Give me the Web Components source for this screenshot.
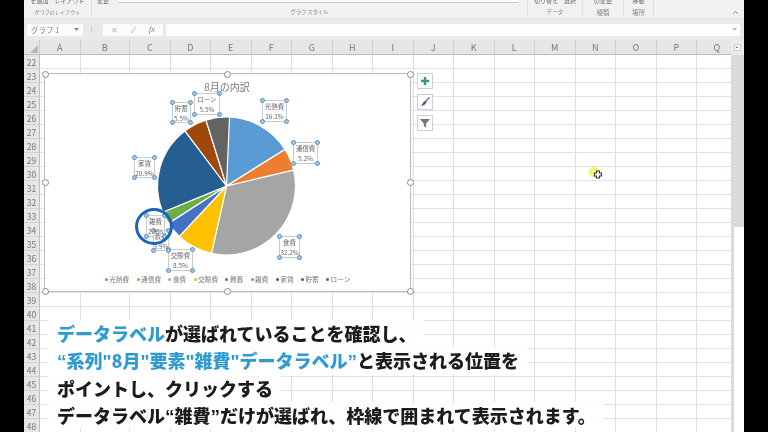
<!DOCTYPE html>
<html lang="ja">
<head>
<meta charset="utf-8">
<title>グラフ</title>
<style>
    html, body { margin: 0; height: 100%; background: #000; overflow: hidden; }
    body { font-family: "Noto Sans CJK JP", "Noto Sans", sans-serif; }
</style>
</head>
<body>
<excel-app>
    <excel-ribbon slot="top"></excel-ribbon>
    <excel-formula-bar slot="top"></excel-formula-bar>
    <excel-sheet>
        <pie-chart></pie-chart>
        <sheet-caption></sheet-caption>
        <cell-cursor></cell-cursor>
    </excel-sheet>
</excel-app>

<script>
class ExcelApp extends HTMLElement {
    connectedCallback() {
        this.attachShadow({ mode: "open" });
        this.shadowRoot.innerHTML = `
            <style>
                :host {
                    display: flex;
                    flex-direction: column;
                    width: 720px;
                    height: 432px;
                    margin-left: 24px;
                    background: #f0f0f0;
                    overflow: hidden;
                    filter: blur(0.45px);
                }
            </style>
            <slot name="top"></slot>
            <slot></slot>
        `;
    }
}

class ExcelRibbon extends HTMLElement {
    connectedCallback() {
        this.attachShadow({ mode: "open" });
        const groups = [
            { w: 68, top: "を追加　レイアウト", label: "グラフのレイアウト", size: 5.1 },
            { w: 436, top: "変更", label: "グラフ スタイル", size: 5.2, gallery: true },
            { w: 55, top: "切り替え　選択", label: "データ", size: 5.6 },
            { w: 41, top: "の変更", label: "種類", size: 6.5 },
            { w: 30, top: "移動", label: "場所", size: 6.5 },
        ];
        this.shadowRoot.innerHTML = `
            <style>
                :host {
                    display: flex;
                    height: 18px;
                    background: #f1f1f1;
                    font-size: 6px;
                    color: #777;
                    flex: none;
                    position: relative;
                    overflow: hidden;
                }
                .group {
                    display: flex;
                    flex-direction: column;
                    align-items: center;
                    justify-content: space-between;
                    border-right: 1px solid #dcdcdc;
                    box-sizing: border-box;
                    height: 17px;
                    position: relative;
                }
                .top { line-height: 6px; margin-top: -2px; white-space: nowrap; color: #666; }
                .label { line-height: 8px; margin-bottom: 1px; white-space: nowrap; color: #888; }
                .gal { align-items: stretch; }
                .gal .top { align-self: flex-start; margin-left: 5px; }
                .gal .label { align-self: center; }
                .strip {
                    position: absolute; left: 26px; right: 8px; top: 0; height: 2px;
                    background: #fbfbfb; border-bottom: 1px solid #c8c8c8;
                }
                .chev {
                    position: absolute; right: 6px; top: 10px;
                    width: 5px; height: 5px;
                }
            </style>
            ${groups.map(g => `
                <div class="group ${g.gallery ? "gal" : ""}" style="width:${g.w}px">
                    ${g.gallery ? '<div class="strip"></div>' : ""}
                    <span class="top">${g.top}</span>
                    <span class="label" style="font-size:${g.size}px">${g.label}</span>
                </div>`).join("")}
            <svg class="chev" viewBox="0 0 5 5"><path d="M0.5 3.5 L2.5 1.5 L4.5 3.5" fill="none" stroke="#777" stroke-width="1"/></svg>
        `;
    }
}

class ExcelFormulaBar extends HTMLElement {
    connectedCallback() {
        this.attachShadow({ mode: "open" });
        this.shadowRoot.innerHTML = `
            <style>
                :host {
                    display: flex;
                    align-items: center;
                    height: 22px;
                    flex: none;
                    background: #e9e9e9;
                    border-top: 1px solid #e2e2e2;
                    box-sizing: border-box;
                    padding: 0 4px 0 3px;
                    gap: 3px;
                    font-size: 7.5px;
                    color: #888;
                }
                .name {
                    width: 56px; height: 12px; background: #fbfbfb;
                    display: flex; align-items: center; justify-content: space-between;
                    padding: 0 4px 0 4px; box-sizing: border-box;
                }
                .name svg { width: 5px; height: 3px; }
                .grip { width: 9px; display: flex; justify-content: center; margin-left: 1px; margin-right: 4px; }
                .grip i { width: 1px; height: 7px; background: #ccc; }
                .fx {
                    width: 60px; height: 12px; background: #fbfbfb;
                    display: flex; align-items: center; justify-content: space-around;
                    padding: 0 2px; box-sizing: border-box; color: #b5b5b5; font-size: 8px;
                }
                .fx b { font-weight: 400; font-style: italic; color: #777; font-family: "Liberation Serif", serif; }
                .input { flex: 1; height: 12px; background: #fdfdfd; display: flex; justify-content: flex-end; align-items: center; padding-right: 3px; }
                .input svg { width: 5px; height: 3px; }
            </style>
            <div class="name"><span>グラフ 1</span><svg viewBox="0 0 5 3"><path d="M0 0H5L2.5 3Z" fill="#888"/></svg></div>
            <div class="grip"><i></i></div>
            <div class="fx"><span>✕</span><span>✓</span><b>fx</b></div>
            <div class="input"><svg viewBox="0 0 5 3"><path d="M0 0H5L2.5 3Z" fill="#bbb"/></svg></div>
        `;
    }
}

class ExcelSheet extends HTMLElement {
    connectedCallback() {
        this.attachShadow({ mode: "open" });
        const cols = ["A","B","C","D","E","F","G","H","I","J","K","L","M","N","O","P","Q"];
        const widths = [40.5, 49.5, 40.5, 40.5, 40.5, 40.5, 40.5, 40.5, 40.5, 40.5, 40.5, 40.5, 40.5, 40.5, 40.5, 40.5, 40.5];
        const rows = [];
        for (let r = 22; r <= 48; r++) rows.push(r);
        const tmpl = widths.map(w => w + "px").join(" ");
        this.shadowRoot.innerHTML = `
            <style>
                :host {
                    display: flex;
                    flex: 1;
                    min-height: 0;
                    position: relative;
                    overflow: hidden;
                    font-size: 9px;
                    color: #777;
                }
                .wrap { flex: 1; min-width: 0; overflow: hidden; }
                .grid {
                    display: grid;
                    grid-template-columns: 16px ${tmpl};
                    grid-auto-rows: 14px;
                    grid-template-rows: 15px;
                    width: max-content;
                }
                .corner, .ch, .rh {
                    background: #e6e6e6;
                    display: flex; align-items: center; justify-content: center;
                    box-sizing: border-box;
                }
                .corner { position: relative; border-right: 1px solid #cfcfcf; border-bottom: 1px solid #bdbdbd; }
                .corner::after {
                    content: ""; position: absolute; right: 1px; bottom: 1px;
                    border-left: 8px solid transparent; border-bottom: 8px solid #b8b8b8;
                }
                .ch { border-right: 1px solid #cdcdcd; border-bottom: 1px solid #bdbdbd; }
                .rh { border-right: 1px solid #bdbdbd; border-bottom: 1px solid #d2d2d2; font-size: 8.5px; }
                .c { background: #fff; border-right: 1px solid #dedede; border-bottom: 1px solid #e2e2e2; box-sizing: border-box; }
                .bar {
                    width: 13px; flex: none; background: #d9dbd9;
                    display: flex; flex-direction: column; position: relative;
                }
                .up {
                    height: 15px; background: #ececec;
                    display: flex; align-items: center; justify-content: center;
                }
                .up i {
                    width: 7px; height: 7px; background: #fff; border: 1px solid #ccc;
                    box-sizing: border-box; display: block; position: relative;
                }
                .up i::after {
                    content: ""; position: absolute; left: 1px; top: 1px;
                    border-left: 1.5px solid transparent; border-right: 1.5px solid transparent; border-bottom: 2px solid #555;
                }
                .track { height: 172px; }
                .thumb { flex: 1; background: #fff; margin-left: 3px; }
            </style>
            <div class="wrap">
                <div class="grid">
                    <div class="corner"></div>
                    ${cols.map(c => `<div class="ch">${c}</div>`).join("")}
                    ${rows.map(r => `<div class="rh">${r}</div>` + cols.map(() => `<div class="c"></div>`).join("")).join("")}
                </div>
            </div>
            <div class="bar"><div class="up"><i></i></div><div class="track"></div><div class="thumb"></div></div>
            <slot></slot>
        `;
    }
}

class DataLabel extends HTMLElement {
    static get observedAttributes() {
        return ["x", "y", "w", "h"];
    }
    attributeChangedCallback() {
        this.place();
    }
    place() {
        this.style.left = this.getAttribute("x") + "px";
        this.style.top = this.getAttribute("y") + "px";
        this.style.width = this.getAttribute("w") + "px";
        this.style.height = this.getAttribute("h") + "px";
    }
    connectedCallback() {
        this.attachShadow({ mode: "open" });
        this.shadowRoot.innerHTML = `
            <style>
                :host {
                    position: absolute;
                    display: flex;
                    flex-direction: column;
                    align-items: center;
                    justify-content: center;
                    gap: 2px;
                    box-sizing: border-box;
                    border: 1px solid #cacaca;
                    font-size: 6.5px;
                    line-height: 8px;
                    color: #666;
                    white-space: nowrap;
                }
                i {
                    position: absolute; width: 3.4px; height: 3.4px; border-radius: 50%;
                    background: #a9c6e3; border: 1px solid #5b8fc0;
                }
                .a { left: -3.2px; top: -3.2px; } .b { right: -3.2px; top: -3.2px; }
                .c { left: -3.2px; bottom: -3.2px; } .d { right: -3.2px; bottom: -3.2px; }
            </style>
            <span>${this.getAttribute("name")}</span>
            <span>${this.getAttribute("value")}</span>
            <i class="a"></i><i class="b"></i><i class="c"></i><i class="d"></i>
        `;
        this.place();
    }
}

class PieChart extends HTMLElement {
    connectedCallback() {
        this.attachShadow({ mode: "open" });
        const slices = [
            ["光熱費", 16.1, "#5b9bd5"],
            ["通信費", 5.2, "#ed7d31"],
            ["食費", 32.2, "#a5a5a5"],
            ["交際費", 8.5, "#ffc000"],
            ["教養", 3.9, "#4472c4"],
            ["雑費", 2.9, "#70ad47"],
            ["家賃", 20.9, "#255e91"],
            ["貯蓄", 5.5, "#9e480e"],
            ["ローン", 5.5, "#636363"],
        ];
        // page coords minus the chart's padding box (45,74)
        const cx = 181.5, cy = 112, r = 69;
        let angle = 0;
        const paths = slices.map(([, v, color]) => {
            const a0 = angle * Math.PI / 180;
            angle += v * 3.6;
            const a1 = angle * Math.PI / 180;
            const large = v > 50 ? 1 : 0;
            const d = `M${cx} ${cy} L${cx + r * Math.sin(a0)} ${cy - r * Math.cos(a0)} A${r} ${r} 0 ${large} 1 ${cx + r * Math.sin(a1)} ${cy - r * Math.cos(a1)} Z`;
            return `<path d="${d}" fill="${color}" stroke="#fff" stroke-width="1.2"/>`;
        }).join("");
        const handles = [[0,0],[50,0],[100,0],[0,50],[100,50],[0,100],[50,100],[100,100]]
            .map(([x, y]) => `<i class="h" style="left:${x}%;top:${y}%"></i>`).join("");
        this.shadowRoot.innerHTML = `
            <style>
                :host {
                    position: absolute;
                    left: 20px; top: 33px;
                    width: 367px; height: 219px;
                    box-sizing: border-box;
                    background: #fff;
                    border: 1px solid #bcbcbc;
                    display: flex;
                    flex-direction: column;
                    align-items: center;
                    color: #777;
                }
                .title { font-size: 10px; line-height: 14px; margin: 6px 0 0 -1px; color: #7a7a7a; }
                svg.pie { position: absolute; left: 0; top: 0; width: 365px; height: 217px; }
                .legend {
                    position: absolute; left: 0; right: 0; top: 200px;
                    display: flex; justify-content: center; gap: 7.3px;
                    font-size: 6.7px; line-height: 10px; color: #777;
                }
                .legend span { display: flex; align-items: center; gap: 1.5px; white-space: nowrap; }
                .legend i { width: 3px; height: 3px; border-radius: 50%; display: block; }
                .h {
                    position: absolute; width: 5px; height: 5px; margin: -3.5px 0 0 -3.5px;
                    border-radius: 50%; background: #fff; border: 1px solid #8a8a8a;
                }
                .tools {
                    position: absolute; left: 372px; top: -1px;
                    display: flex; flex-direction: column; gap: 5px;
                }
                .tool {
                    width: 16px; height: 16px; box-sizing: border-box; background: #fff;
                    border: 1px solid #cfcfcf; display: flex; align-items: center; justify-content: center;
                }
                .tool svg { width: 12px; height: 12px; }
                .ring {
                    position: absolute; left: 90px; top: 134px; width: 38px; height: 37px;
                    box-sizing: border-box; border: 3.5px solid #1565c0; border-radius: 50%;
                }
            </style>
            <svg class="pie" viewBox="0 0 365 217">${paths}</svg>
            <div class="title">8月の内訳</div>
            <div class="legend">
                ${slices.map(([n, , c]) => `<span><i style="background:${c}"></i>${n}</span>`).join("")}
            </div>
            <data-label name="光熱費" value="16.1%" x="217" y="26" w="25" h="22"></data-label>
            <data-label name="通信費" value="5.2%" x="248" y="68" w="25" h="22"></data-label>
            <data-label name="貯蓄" value="5.5%" x="127" y="28" w="19" h="21"></data-label>
            <data-label name="ローン" value="5.5%" x="149" y="19" w="26" h="22"></data-label>
            <data-label name="家賃" value="20.9%" x="89" y="83" w="21" h="21"></data-label>
            <data-label name="食費" value="32.2%" x="234" y="162" w="21" h="22"></data-label>
            <data-label name="交際費" value="8.5%" x="123" y="175" w="25" h="22"></data-label>
            <data-label name="教養" value="3.9%" x="108" y="156" w="16" h="21"></data-label>
            <data-label name="雑費" value="2.9%" x="101" y="141" w="19" h="22"></data-label>
            <div class="ring"></div>
            ${handles}
            <div class="tools">
                <div class="tool"><svg viewBox="0 0 12 12"><path d="M6 2V10M2 6H10" stroke="#3f9477" stroke-width="2.4" fill="none"/></svg></div>
                <div class="tool"><svg viewBox="0 0 12 12"><path d="M10.5 1.5 L6 6" stroke="#6d7fa8" stroke-width="1.6" fill="none"/><path d="M6.5 5 L7.5 6 Q6.5 9.5 1.5 10 Q4 8.5 4.5 6 Z" fill="#3f4f8a"/></svg></div>
                <div class="tool"><svg viewBox="0 0 12 12"><path d="M1 2H11L7.2 6.5V10.5L4.8 9V6.5Z" fill="#777"/></svg></div>
            </div>
        `;
    }
}

class SheetCaption extends HTMLElement {
    connectedCallback() {
        this.attachShadow({ mode: "open" });
        this.shadowRoot.innerHTML = `
            <style>
                :host {
                    position: absolute;
                    left: 24px; top: 280px;
                    display: flex;
                    flex-direction: column;
                    align-items: flex-start;
                    font-size: 18px;
                    font-weight: 900;
                    line-height: 27.3px;
                    color: #1c1c1c;
                    white-space: nowrap;
                }
                .line { height: 27.3px; background: rgba(255,255,255,.88); padding: 0 8px 0 9px; }
                .blue { color: #2f9bd1; }
                .q { font-family: "Liberation Sans", sans-serif; font-size: 19px; line-height: 1; }
            </style>
            <div class="line"><span class="blue">データラベル</span>が選ばれていることを確認し、</div>
            <div class="line"><span class="blue"><span class="q">“</span>系列<span class="q">"</span>8月<span class="q">"</span>要素<span class="q">"</span>雑費<span class="q">"</span>データラベル<span class="q">”</span></span>と表示される位置を</div>
            <div class="line">ポイントし、クリックする</div>
            <div class="line">データラベル<span class="q">“</span>雑費<span class="q">”</span>だけが選ばれ、枠線で囲まれて表示されます。</div>
        `;
    }
}

class CellCursor extends HTMLElement {
    connectedCallback() {
        this.attachShadow({ mode: "open" });
        this.shadowRoot.innerHTML = `
            <style>
                :host { position: absolute; left: 564px; top: 125px; width: 16px; height: 16px; display: block; }
                svg { width: 16px; height: 16px; display: block; }
            </style>
            <svg viewBox="0 0 16 16">
                <circle cx="6" cy="7" r="5.5" fill="#f7f06a" opacity=".85"/>
                <path d="M8.5 8V6H11.5V8H13.5V11H11.5V13H8.5V11H6.5V8Z" fill="#fff" stroke="#333" stroke-width="1.1"/>
            </svg>
        `;
    }
}

customElements.define("excel-app", ExcelApp);
customElements.define("excel-ribbon", ExcelRibbon);
customElements.define("excel-formula-bar", ExcelFormulaBar);
customElements.define("excel-sheet", ExcelSheet);
customElements.define("data-label", DataLabel);
customElements.define("pie-chart", PieChart);
customElements.define("sheet-caption", SheetCaption);
customElements.define("cell-cursor", CellCursor);
</script>
</body>
</html>
